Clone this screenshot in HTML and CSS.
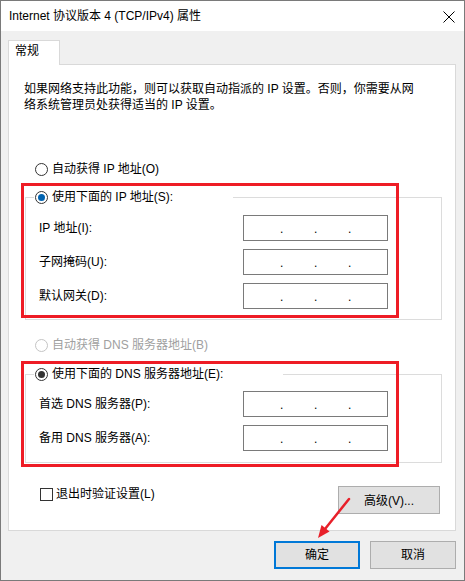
FILE: index.html
```html
<!DOCTYPE html>
<html lang="zh-CN">
<head>
	<meta charset="UTF-8">
	<title>Internet 协议版本 4 (TCP/IPv4) 属性</title>
	<link rel="stylesheet" href="styles.css">
</head>
<body>
	<!--窗口-->
	<div class="window">
		<div class="titlebar">
			<span class="title">Internet 协议版本 4 (TCP/IPv4) 属性</span>
			<svg class="close" width="12" height="12" viewBox="0 0 12 12">
				<path d="M0.5 0.5 L11.5 11.5 M11.5 0.5 L0.5 11.5" stroke="#000" stroke-width="1" fill="none"/>
			</svg>
		</div>

		<div class="main">
			<div class="tabs">
				<div class="tab">常规</div>
			</div>

			<div class="panel">
				<p class="desc">如果网络支持此功能，则可以获取自动指派的 IP 设置。否则，你需要从网<br>络系统管理员处获得适当的 IP 设置。</p>

				<div class="radio radio-top"><span class="circle"></span>自动获得 IP 地址(O)</div>

				<!--IP 地址-->
				<div class="group group-ip">
					<div class="group-title"><span class="circle on blue"></span>使用下面的 IP 地址(S):</div>
					<div class="row">
						<label>IP 地址(I):</label>
						<div class="ip"><span>.</span><span>.</span><span>.</span></div>
					</div>
					<div class="row">
						<label>子网掩码(U):</label>
						<div class="ip"><span>.</span><span>.</span><span>.</span></div>
					</div>
					<div class="row">
						<label>默认网关(D):</label>
						<div class="ip"><span>.</span><span>.</span><span>.</span></div>
					</div>
				</div>

				<div class="radio radio-dns disabled"><span class="circle"></span>自动获得 DNS 服务器地址(B)</div>

				<!--DNS-->
				<div class="group group-dns">
					<div class="group-title"><span class="circle on"></span>使用下面的 DNS 服务器地址(E):</div>
					<div class="row">
						<label>首选 DNS 服务器(P):</label>
						<div class="ip"><span>.</span><span>.</span><span>.</span></div>
					</div>
					<div class="row">
						<label>备用 DNS 服务器(A):</label>
						<div class="ip"><span>.</span><span>.</span><span>.</span></div>
					</div>
				</div>

				<div class="footer">
					<div class="check"><span class="box"></span>退出时验证设置(L)</div>
					<button class="btn btn-adv">高级(V)...</button>
				</div>
			</div>

			<div class="actions">
				<button class="btn btn-ok">确定</button>
				<button class="btn">取消</button>
			</div>
		</div>

		<!--红框标注-->
		<div class="mark mark-ip"></div>
		<div class="mark mark-dns"></div>
		<svg class="arrow" width="465" height="581" viewBox="0 0 465 581">
			<line x1="349" y1="499" x2="325" y2="529" stroke="#e8202a" stroke-width="2.5" stroke-linecap="round"/>
			<polygon points="318,538 329.5,531.5 321.5,525" fill="#e8202a"/>
		</svg>
	</div>
</body>
</html>
```

FILE: styles.css
```css
* {
    padding: 0;
    margin: 0;
    box-sizing: border-box;
}

body {
    font-family: "Liberation Sans", "Noto Sans CJK SC", sans-serif;
    font-size: 12px;
    line-height: 16px;
    color: #000;
    background: #fff;
}

.window {
    width: 465px;
    height: 581px;
    border: 1px solid #7a7a7a;
    background: #f0f0f0;
    position: relative;
}

.titlebar {
    height: 30px;
    background: #fff;
    display: flex;
    align-items: center;
    justify-content: space-between;
    padding: 0 9px 0 8px;
}

.close {
    display: block;
    margin-top: 1px;
}

.main {
    padding: 9px 8px 0 7px;
}

.tabs {
    display: flex;
}

.tab {
    width: 52px;
    height: 25px;
    padding: 2px 0 0 6px;
    background: #fff;
    border: 1px solid #d9d9d9;
    border-bottom: 0;
    margin-bottom: -1px;
    position: relative;
    z-index: 1;
}

.panel {
    width: 448px;
    background: #fff;
    border: 1px solid #d9d9d9;
    padding: 16px 13px 16px 15px;
}

.desc {
    height: 32px;
}

.radio {
    display: flex;
    align-items: center;
    height: 16px;
    padding-left: 11px;
}

.radio-top {
    margin-top: 48px;
}

.radio-dns {
    margin-top: 17px;
}

.disabled {
    color: #a0a0a0;
}

.circle {
    width: 13px;
    height: 13px;
    border: 1px solid #333;
    border-radius: 50%;
    background: #fff;
    margin-right: 4px;
    position: relative;
    flex-shrink: 0;
}

.disabled .circle {
    border-color: #c4c4c4;
}

.circle.on::after {
    content: "";
    position: absolute;
    left: 2px;
    top: 2px;
    width: 7px;
    height: 7px;
    border-radius: 50%;
    background: #333;
}

.circle.blue::after {
    background: #0063b1;
}

.group {
    margin-left: 1px;
    border: 1px solid #dcdcdc;
    padding: 0 0 10px 13px;
}

.group-ip {
    margin-top: 20px;
}

.group-dns {
    margin-top: 21px;
    padding-bottom: 11px;
}

.group-title {
    display: flex;
    align-items: center;
    width: fit-content;
    height: 16px;
    margin: -9px 0 0 -5px;
    padding: 0 60px 0 1px;
    background: #fff;
}

.row {
    display: flex;
    align-items: center;
    height: 26px;
    margin-top: 8px;
}

.group-ip .group-title + .row {
    margin-top: 10px;
}

.group-dns .group-title + .row {
    margin-top: 9px;
}

.row label {
    width: 204px;
}

.ip {
    width: 145px;
    height: 26px;
    border: 1px solid #7a7a7a;
    display: flex;
    align-items: center;
    gap: 31px;
    padding: 1px 0 0 36px;
}

.ip span {
    width: 3px;
}

.footer {
    display: flex;
    justify-content: space-between;
    align-items: flex-start;
    margin-top: 23px;
}

.check {
    display: flex;
    align-items: center;
    height: 16px;
    padding-left: 16px;
}

.box {
    width: 13px;
    height: 13px;
    border: 1px solid #333;
    background: #fff;
    margin-right: 3px;
}

.btn {
    font: inherit;
    color: #000;
    height: 28px;
    background: #e1e1e1;
    border: 1px solid #adadad;
}

.btn-adv {
    width: 102px;
    margin-right: 2px;
    padding-top: 1px;
}

.actions {
    display: flex;
    justify-content: flex-end;
    gap: 10px;
    margin-top: 10px;
}

.actions .btn {
    width: 86px;
}

.btn-ok {
    border: 2px solid #0078d7;
}

.mark {
    position: absolute;
    left: 20px;
    width: 378px;
    border: 3px solid #ee1c25;
}

.mark-ip {
    top: 182px;
    height: 135px;
}

.mark-dns {
    top: 360px;
    height: 106px;
}

.arrow {
    position: absolute;
    left: -1px;
    top: -1px;
    pointer-events: none;
}
```
